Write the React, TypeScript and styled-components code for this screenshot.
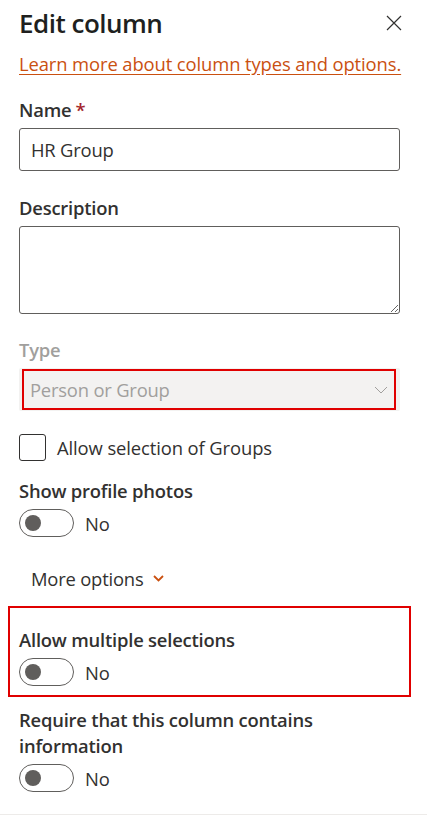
import styled, { createGlobalStyle } from "styled-components";

const GlobalStyle = createGlobalStyle`
  html, body {
    margin: 0;
    padding: 0;
    background: #ffffff;
  }
  body {
    font-family: "Open Sans", "Noto Sans", Arial, sans-serif;
    color: #323130;
  }
  * {
    box-sizing: border-box;
  }
`;

const Panel = styled.div`
  width: 427px;
  min-height: 826px;
  padding: 5px 27px 0 19px;
  background: #ffffff;
`;

const Header = styled.div`
  display: flex;
  align-items: center;
  justify-content: space-between;
  height: 36px;
`;

const Title = styled.h1`
  margin: 0;
  font-size: 26px;
  font-weight: 600;
  line-height: 36px;
  color: #201f1e;
  letter-spacing: -0.5px;
`;

const CloseButton = styled.button`
  width: 24px;
  height: 24px;
  margin-right: -6px;
  padding: 0;
  border: none;
  background: transparent;
  display: flex;
  align-items: center;
  justify-content: center;
  cursor: pointer;
`;

const HelpLink = styled.a`
  display: block;
  margin-top: 10px;
  font-size: 18.4px;
  line-height: 26px;
  color: #ca5010;
  text-decoration: underline;
  text-underline-offset: 3px;
  white-space: nowrap;
  letter-spacing: -0.1px;
`;

const Label = styled.div<{ $top: number; $muted?: boolean }>`
  margin-top: ${(p) => p.$top}px;
  margin-bottom: 5px;
  font-size: 18.4px;
  font-weight: 600;
  line-height: 26px;
  color: ${(p) => (p.$muted ? "#a19f9d" : "#323130")};
  letter-spacing: -0.2px;
`;

const Required = styled.span`
  color: #a4262c;
  margin-left: 4px;
`;

const TextInput = styled.input`
  display: block;
  width: 100%;
  height: 43px;
  margin-top: 1px;
  padding: 0 11px;
  border: 1px solid #605e5c;
  border-radius: 3px;
  font-family: inherit;
  font-size: 18.4px;
  color: #323130;
  letter-spacing: -0.2px;
  outline: none;
`;

const TextArea = styled.textarea`
  display: block;
  width: 100%;
  height: 88px;
  padding: 8px 11px;
  border: 1px solid #605e5c;
  border-radius: 3px;
  font-family: inherit;
  font-size: 18.4px;
  resize: vertical;
  outline: none;
`;

const Dropdown = styled.div`
  position: relative;
  display: flex;
  align-items: center;
  justify-content: space-between;
  height: 43px;
  padding: 0 12px 0 11px;
  background: #f3f2f1;
  border-radius: 2px;
  font-size: 18.4px;
  color: #a19f9d;
  letter-spacing: -0.2px;

  &::after {
    content: "";
    position: absolute;
    left: 3px;
    right: 4px;
    top: 1px;
    bottom: 1px;
    border: 2px solid #e00000;
    pointer-events: none;
  }
`;

const CheckRow = styled.label`
  display: flex;
  align-items: center;
  gap: 11px;
  margin-top: 23px;
  height: 27px;
  font-size: 18.4px;
  color: #323130;
  letter-spacing: -0.1px;
`;

const CheckBox = styled.span`
  width: 27px;
  height: 27px;
  border: 1px solid #323130;
  border-radius: 3px;
  flex-shrink: 0;
`;

const ToggleRow = styled.div`
  display: flex;
  align-items: center;
  gap: 11px;
  height: 28px;
  font-size: 18.4px;
  color: #323130;
`;

const Track = styled.span`
  position: relative;
  width: 55px;
  height: 28px;
  border: 1px solid #605e5c;
  border-radius: 14px;
  flex-shrink: 0;
`;

const Thumb = styled.span`
  position: absolute;
  left: 5px;
  top: 5px;
  width: 16px;
  height: 16px;
  border-radius: 50%;
  background: #605e5c;
`;

const MoreOptions = styled.button`
  display: flex;
  align-items: center;
  gap: 10px;
  margin-top: 28px;
  padding: 0 0 0 12px;
  height: 26px;
  border: none;
  background: transparent;
  font-family: inherit;
  font-size: 18.4px;
  color: #323130;
  letter-spacing: -0.2px;
  cursor: pointer;
`;

const Highlight = styled.div`
  margin: 15px -11px 0 -11px;
  padding: 19px 9px 9px 9px;
  border: 2px solid #e00000;

  & > div:first-child {
    margin-top: 0;
  }
`;

const Divider = styled.div`
  margin: 22px -27px 0 -19px;
  border-top: 1px solid #edebe9;
`;

function Toggle() {
  return (
    <ToggleRow>
      <Track>
        <Thumb />
      </Track>
      No
    </ToggleRow>
  );
}

export default function App() {
  return (
    <>
      <GlobalStyle />
      <Panel>
        <Header>
          <Title>Edit column</Title>
          <CloseButton aria-label="Close">
            <svg width="16" height="16" viewBox="0 0 16 16">
              <path
                d="M1 1 L15 15 M15 1 L1 15"
                stroke="#323130"
                strokeWidth="1.2"
                fill="none"
              />
            </svg>
          </CloseButton>
        </Header>
        <HelpLink href="#">Learn more about column types and options.</HelpLink>

        <Label $top={20}>
          Name<Required>*</Required>
        </Label>
        <TextInput defaultValue="HR Group" />

        <Label $top={24}>Description</Label>
        <TextArea />

        <Label $top={23} $muted>
          Type
        </Label>
        <Dropdown>
          Person or Group
          <svg width="14" height="8" viewBox="0 0 14 8">
            <path d="M1 1 L7 7 L13 1" stroke="#a19f9d" strokeWidth="1" fill="none" />
          </svg>
        </Dropdown>

        <CheckRow>
          <CheckBox />
          Allow selection of Groups
        </CheckRow>

        <Label $top={17}>Show profile photos</Label>
        <Toggle />

        <MoreOptions>
          More options
          <svg width="11" height="7" viewBox="0 0 11 7">
            <path d="M1 1 L5.5 5.5 L10 1" stroke="#ca5010" strokeWidth="1.8" fill="none" />
          </svg>
        </MoreOptions>

        <Highlight>
          <Label $top={0}>Allow multiple selections</Label>
          <Toggle />
        </Highlight>

        <Label $top={10}>Require that this column contains information</Label>
        <Toggle />

        <Divider />
      </Panel>
    </>
  );
}
